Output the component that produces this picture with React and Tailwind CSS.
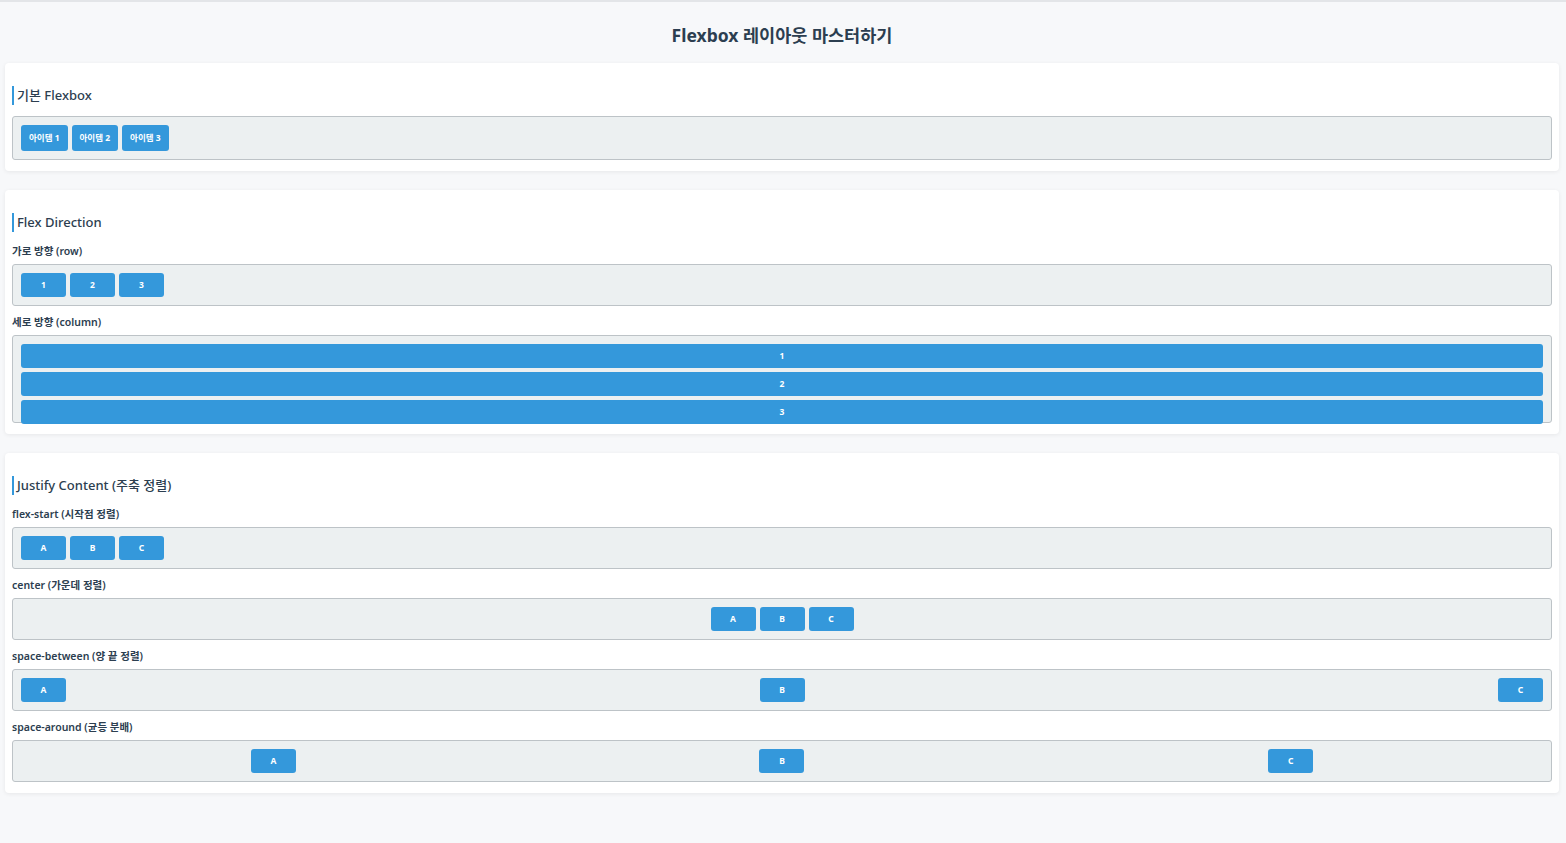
import React from "react";

const font = { fontFamily: '"Noto Sans", "Noto Sans CJK KR", sans-serif' };

function Item({ children, tall }) {
  return (
    <div
      className={`${tall ? "h-[26px]" : "h-[24px]"} min-w-[45px] px-2 flex items-center justify-center bg-[#3498db] text-white text-[8.5px] font-bold rounded-[3px] shrink-0`}
    >
      {children}
    </div>
  );
}

function Box({ className = "", children }) {
  return (
    <div className={`bg-[#ecf0f1] border border-[#bdc3c7] rounded-[3px] p-2 flex gap-1 ${className}`}>
      {children}
    </div>
  );
}

function Card({ title, children }) {
  return (
    <section className="bg-white rounded-[4px] shadow-[0_1px_4px_rgba(0,0,0,0.07)] px-[7px] pt-[23px] pb-[11px]">
      <h3 className="border-l-2 border-[#3498db] pl-[3px] h-[19px] flex items-center text-[13px] font-medium text-[#2c3e50] mb-[11px]">
        {title}
      </h3>
      {children}
    </section>
  );
}

function Label({ children, first }) {
  return (
    <div className={`text-[10.5px] font-semibold text-[#2c3e50] h-[14px] leading-[14px] mb-[6px] ${first ? "mt-[12px]" : "mt-[9px]"}`}>
      {children}
    </div>
  );
}

export default function App() {
  const abc = ["A", "B", "C"];
  const justify = [
    { label: "flex-start (시작점 정렬)", cls: "justify-start" },
    { label: "center (가운데 정렬)", cls: "justify-center" },
    { label: "space-between (양 끝 정렬)", cls: "justify-between" },
    { label: "space-around (균등 분배)", cls: "justify-around" },
  ];

  return (
    <div style={font} className="min-h-[843px] bg-[#f7f8fa] border-t-2 border-[#e3e5e8] pl-[5px] pr-[7px] pb-10">
      <h1 className="text-center text-[17.5px] font-bold text-[#2c3e50] leading-[24px] pt-[21px] mb-[16px]">
        Flexbox 레이아웃 마스터하기
      </h1>

      <div className="flex flex-col gap-[19px]">
        <Card title="기본 Flexbox">
          <Box>
            <Item tall>아이템 1</Item>
            <Item tall>아이템 2</Item>
            <Item tall>아이템 3</Item>
          </Box>
        </Card>

        <Card title="Flex Direction">
          <Label first>가로 방향 (row)</Label>
          <Box>
            <Item>1</Item>
            <Item>2</Item>
            <Item>3</Item>
          </Box>
          <Label>세로 방향 (column)</Label>
          <div className="bg-[#ecf0f1] border border-[#bdc3c7] rounded-[3px] p-2 flex flex-col gap-1 h-[88px]">
            {["1", "2", "3"].map((n) => (
              <div
                key={n}
                className="h-[24px] shrink-0 flex items-center justify-center bg-[#3498db] text-white text-[8.5px] font-bold rounded-[3px]"
              >
                {n}
              </div>
            ))}
          </div>
        </Card>

        <Card title="Justify Content (주축 정렬)">
          {justify.map((j, i) => (
            <div key={j.label}>
              <Label first={i === 0}>{j.label}</Label>
              <Box className={j.cls}>
                {abc.map((c) => (
                  <Item key={c}>{c}</Item>
                ))}
              </Box>
            </div>
          ))}
        </Card>
      </div>
    </div>
  );
}
